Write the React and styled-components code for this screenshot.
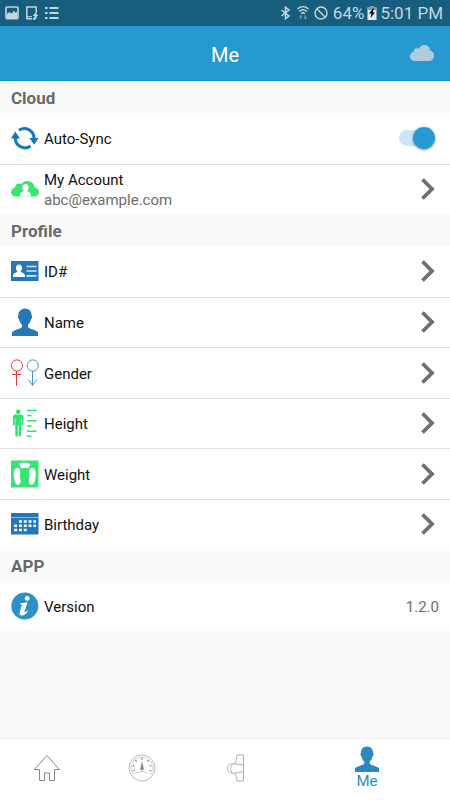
import React, { useState } from "react";
import styled, { createGlobalStyle } from "styled-components";

const GlobalStyle = createGlobalStyle`
  * {
    box-sizing: border-box;
  }

  body {
    margin: 0;
    background: #fafafa;
    font-family: Roboto, "Liberation Sans", sans-serif;
  }

  button {
    font-family: inherit;
  }

  svg {
    display: block;
    flex-shrink: 0;
  }
`;

const Base = styled.div`
  display: flex;
  flex-direction: column;
  min-height: 100vh;
`;

const StatusBar = styled.div`
  display: flex;
  align-items: center;
  justify-content: space-between;
  height: 26px;
  padding: 0 7px 0 5px;
  background: #175d7e;
  color: #c5d7df;
  font-size: 17px;
  line-height: 28px;
`;

const StatusGroup = styled.div`
  display: flex;
  align-items: center;
  gap: ${(props) => props.$gap}px;
`;

const Header = styled.header`
  display: grid;
  grid-template-columns: 1fr auto 1fr;
  align-items: center;
  height: 55px;
  padding: 0 16px;
  background: #2699d2;
  border-bottom: 1px solid #0d94cf;
`;

const Title = styled.h1`
  grid-column: 2;
  margin: 0;
  padding-top: 3px;
  color: #fff;
  font-size: 20px;
  font-weight: 400;
`;

const CloudButton = styled.button`
  justify-self: end;
  padding: 0;
  border: 0;
  background: none;
`;

const Main = styled.main`
  flex: 1;
`;

const SectionTitle = styled.h2`
  height: 32px;
  margin: 0;
  padding: 0 11px;
  background: #fafafa;
  color: #68696d;
  font-size: 17px;
  font-weight: 700;
  line-height: 34px;
`;

const List = styled.ul`
  display: grid;
  grid-auto-rows: 1fr;
  min-height: ${(props) => props.$minHeight}px;
  margin: 0;
  padding: 0;
  background: #fff;
  list-style: none;
`;

const Item = styled.li`
  display: flex;

  & + & {
    border-top: 1px solid #e2e2e2;
  }
`;

const Row = styled.div`
  flex: 1;
  display: flex;
  align-items: center;
  gap: 5px;
  width: 100%;
  padding: 0 ${(props) => props.$end || 15}px 0 11px;
  border: 0;
  background: none;
  color: #111;
  font-size: 15px;
  line-height: 20px;
  text-align: left;
`;

const RowText = styled.span`
  flex: 1;
  display: flex;
  flex-direction: column;
  padding-top: 2px;
`;

const Muted = styled.span`
  color: #6c6c6c;
`;

const Version = styled(Muted)`
  padding-top: 2px;
`;

const Switch = styled.input`
  appearance: none;
  display: flex;
  align-items: center;
  width: 36px;
  height: 16px;
  margin: 0;
  border-radius: 8px;
  background: ${(props) => (props.checked ? "#c8e6f3" : "#c4c4c4")};

  &::before {
    content: "";
    width: 22px;
    height: 22px;
    margin-left: ${(props) => (props.checked ? 14 : 0)}px;
    border-radius: 50%;
    background: ${(props) => (props.checked ? "#2699d2" : "#f5f5f5")};
    box-shadow: 0 1px 3px rgba(0, 0, 0, 0.4);
  }
`;

const TabBar = styled.nav`
  position: sticky;
  bottom: 0;
  display: grid;
  grid-template-columns: 95fr 95fr 95fr 165fr;
  height: 62px;
  border-top: 1px solid #eee;
  background: #fff;
`;

const TabButton = styled.button`
  display: flex;
  flex-direction: column;
  align-items: center;
  justify-content: center;
  padding: 0 1px 3px 0;
  border: 0;
  background: none;
  color: #2490c9;
  font-size: 15px;
  line-height: 18px;
`;

function PersonIcon({ color = "#2379b5", size = 28 }) {
  return (
    <svg width={size} height={size} viewBox="0 0 28 28" fill={color}>
      <path d="M14 0.500c4 0 6.600 3 6.600 6.700 0 .6.5.8.5 1.700 0 1-.5 1.800-1.100 2.300-.6 2.600-1.700 4.300-3 5.500v2.200c.6 2 9.500 3 10 5.600v3.700H1v-3.700c.5-2.600 9.400-3.600 10-5.600v-2.200c-1.300-1.200-2.400-2.900-3-5.500-.6-.5-1.100-1.300-1.100-2.300 0-.9.5-1.100.5-1.700C7.400 3.500 10 .5 14 .5z" />
    </svg>
  );
}

function SyncIcon() {
  return (
    <svg width="28" height="28" viewBox="0 0 28 28">
      <g fill="none" stroke="#1976b8" strokeWidth="3">
        <path d="M8 6.300A9.600 9.600 0 0 1 23 14" />
        <path d="M19.500 22A9.600 9.600 0 0 1 4.300 14" />
      </g>
      <path d="M0 14.500 4.200 7.500 9 14.500zM18.300 14h9.200l-4.300 6.800z" fill="#1976b8" />
    </svg>
  );
}

function AccountIcon() {
  return (
    <svg width="28" height="28" viewBox="0 0 28 28">
      <path
        d="M5 21.500C2 21.500 0 19.500 0 17c0-2.500 1.700-4.300 4-4.600C4.300 10 6 8.500 8 8.500c1 0 1.700.3 2.300.8C11.500 7.200 13.600 6 16 6c4.200 0 7.200 2.800 7.600 6.200 2.500.4 4.400 2.300 4.400 4.800 0 2.600-2 4.500-5 4.500z"
        fill="#38e476"
      />
      <path
        d="M14.500 9c2 0 3.200 1.400 3.200 3.300 0 1.500-.7 2.500-1.300 3.200.3 1.500 3.200 1.400 3.600 4V21.500H9V19.500c.4-2.600 3.300-2.500 3.600-4-.7-.7-1.300-1.700-1.300-3.200 0-1.900 1.200-3.300 3.200-3.300z"
        fill="#fff"
      />
    </svg>
  );
}

function CardIcon() {
  return (
    <svg width="28" height="28" viewBox="0 0 28 28">
      <path d="M0 4h27.500v20H0z" fill="#2379b5" />
      <path
        d="M8 7.500c1.900 0 3 1.500 3 3.400 0 1.500-.6 2.600-1.300 3.300.2 1.500 4 1.300 4.300 4V20H2v-1.800c.3-2.700 4.100-2.500 4.300-4C5.600 13.500 5 12.400 5 10.900 5 9 6.100 7.500 8 7.500z"
        fill="#fff"
      />
      <path d="M15.500 9.500h10M15.500 14h10M15.500 18.800h10" stroke="#d5e5f1" strokeWidth="1.700" />
    </svg>
  );
}

function GenderIcon() {
  return (
    <svg width="28" height="28" viewBox="0 0 28 28" fill="none">
      <g stroke="#ee3437">
        <circle cx="5.900" cy="6.500" r="5.600" />
        <path d="M5.500 12V27M1 15.500h9" />
      </g>
      <g stroke="#4893c9">
        <circle cx="21.700" cy="6.500" r="5.600" />
        <path d="M21.500 12V26.500M17.300 20.500 21.500 26.300 26 20.500" />
      </g>
    </svg>
  );
}

function HeightIcon() {
  return (
    <svg width="28" height="28" viewBox="0 0 28 28">
      <g fill="#2fe370">
        <circle cx="7.200" cy="2.700" r="2.300" />
        <path d="M4.500 5.500h5.400c1.600 0 2.600 1.100 2.600 2.600v7.400c0 1.300-1.800 1.300-1.800 0V9.200h-.5v17.200c0 1.600-2.500 1.600-2.500 0V16.500H6.800v9.900c0 1.600-2.500 1.600-2.500 0V9.200h-.5v6.300c0 1.300-1.800 1.300-1.800 0V8.100c0-1.500 1-2.600 2.500-2.600z" />
      </g>
      <path
        d="M16 1.500h9.500M16 6.500h4.500M16 11.700h9.500M16 17h4.500M16 22.200h9.500M16 27.200h4.500"
        stroke="#2fe370"
        strokeWidth="1.500"
      />
    </svg>
  );
}

function WeightIcon() {
  return (
    <svg width="28" height="28" viewBox="0 0 28 28">
      <path d="M0 .5h27.500v27H0z" fill="#38e476" />
      <g fill="#fff">
        <path d="M8 4c3-1.700 8.500-1.700 11.500 0L17.200 8.300c-2-.8-5-.8-7 0z" />
        <path d="M5.700 8C8.200 7.300 9.500 9.500 9.200 12.500c-.2 2.500-.4 3.500.2 6.500.5 2.700.3 5.200-1.800 5.700-2.200.4-3.600-1.700-4.200-4.700C2.400 15 2 9.200 5.700 8z" />
        <path d="M21.800 8c-2.500-.7-3.800 1.500-3.500 4.500.2 2.500.4 3.500-.2 6.500-.5 2.700-.3 5.200 1.800 5.700 2.200.4 3.600-1.700 4.200-4.700 1-5 1.400-10.800-2.300-12z" />
      </g>
    </svg>
  );
}

function CalendarIcon() {
  return (
    <svg width="28" height="28" viewBox="0 0 28 28">
      <path d="M0 3h27.500v21.500H0z" fill="#2379b5" />
      <path d="M0 7.500h27.500" stroke="#8dbbdb" />
      <g stroke="#fff" strokeWidth="2.600" strokeDasharray="2.900 1.900">
        <path d="M8 11.500h17" />
        <path d="M3.200 15.700h21.800" />
        <path d="M3.200 20h12.500" />
      </g>
    </svg>
  );
}

function InfoIcon() {
  return (
    <svg width="28" height="28" viewBox="0 0 28 28">
      <circle cx="13.800" cy="14" r="13.500" fill="#2b91c6" />
      <circle cx="16.200" cy="6.400" r="2.400" fill="#fff" />
      <path
        d="M9 11.500c2.500-.7 5-1.300 7.500-1.300l-3 9.500c-.3 1.200.7 1 2.800-1.200l.6.700c-2 3-4 4.300-6.300 4.300-2 0-2.500-1.500-1.900-3.300l2.100-6.700c.3-1-.3-1.200-1.800-1.200z"
        fill="#fff"
      />
    </svg>
  );
}

function ChevronIcon() {
  return (
    <svg width="14" height="22" viewBox="0 0 14 22">
      <path d="M1.500 1.500 11 11 1.500 20.500" fill="none" stroke="#6f6f6f" strokeWidth="3.800" />
    </svg>
  );
}

function CloudIcon() {
  return (
    <svg width="24" height="16" viewBox="0 0 24 16">
      <path
        d="M5 16c-3 0-5-1.800-5-4.500 0-2.300 1.500-4 3.600-4.500C3.700 4.600 5 3.300 7 3.300c.8 0 1.300.1 1.900.5C10 1.300 12 0 14.300 0c3.300 0 5.600 2.300 5.700 5.500 2.500.4 4 2.300 4 5 0 3.300-2 5.500-5 5.500z"
        fill="#b0ccdb"
      />
    </svg>
  );
}

function HomeIcon() {
  return (
    <svg width="28" height="28" viewBox="0 0 28 28">
      <path
        d="M14 1.500 26.500 15.500h-5v11h-5V19h-5v7.500h-5v-11h-5z"
        fill="none"
        stroke="#888"
      />
    </svg>
  );
}

function GaugeIcon() {
  return (
    <svg width="28" height="28" viewBox="0 0 28 28" fill="none" stroke="#bbb">
      <circle cx="14" cy="14" r="13" />
      <path d="M5 20.500a11 11 0 1 1 18 0c-2-1.500-3-2.300-5-2-1.500-1.400-6.500-1.400-8 0-2-.3-3 .5-5 2z" stroke="#d4d4d4" />
      <path
        d="M14 3.500v2.500M7.300 5.800l1.500 2M20.700 5.800l-1.500 2M4.300 11.500l2.300.7M23.700 11.500l-2.300.7M4.500 17l2.300-.7M23.500 17l-2.300-.7"
        stroke="#999"
        strokeWidth="1.300"
      />
      <path d="M14 7l1.800 7.800a1.800 1.800 0 1 1-3.600 0z" fill="#888" stroke="none" />
    </svg>
  );
}

function DeviceIcon() {
  return (
    <svg width="28" height="28" viewBox="0 0 28 28" fill="none" stroke="#b0b0b0">
      <path d="M20.500.8H14l-.8 4.700c-.3 2-.8 3.500-2.400 4.200L8 9.900C5.500 10.200 4.500 12 4.500 14s1 4.300 3.500 4.800l2.800.5c1.600.5 2.200 2 2.400 3.700l.8 4h6.500z" />
      <path d="M20.500 11 10.500 9.700M20.500 17.700 10.800 19.300M9.500 10.300C7.200 12 7 16.500 9.500 18.800" />
    </svg>
  );
}

function NotificationIcons() {
  return (
    <StatusGroup $gap={6}>
      <svg width="14" height="14" viewBox="0 0 14 14">
        <rect x="1" y="1" width="12" height="11.800" rx="1" fill="none" stroke="#c5d7df" strokeWidth="1.600" />
        <path d="M2 8 4.500 6l2 1.800 2.300-3 1.500 2L12 5.800V12H2z" fill="#c5d7df" />
      </svg>
      <svg width="14" height="14" viewBox="0 0 14 14" fill="none" stroke="#c5d7df">
        <path d="M7 12.700H1.800V.9h9.400v6" strokeWidth="1.500" />
        <path d="M2 10.700h5" />
        <path d="M10.500 6.500l2.800 3.500h-1.500c0 2.500-1 4-3.500 4l-.8-1.500c1.500 0 2-.8 2-2.500H7.700z" fill="#c5d7df" stroke="none" />
      </svg>
      <svg width="14" height="14" viewBox="0 0 14 14" stroke="#c5d7df" strokeWidth="1.800">
        <path d="M0 2h2.500M4.500 2H13.500M0 7h2.500M4.500 7H13.500M0 12h2.500M4.500 12H13.500" />
      </svg>
    </StatusGroup>
  );
}

function PhoneStatus() {
  return (
    <StatusGroup $gap={5}>
      <svg width="11" height="14" viewBox="0 0 11 14" fill="none" stroke="#c5d7df" strokeWidth="1.500">
        <path d="M1.500 4 9 10 5.500 12.800V1.200L9 4 1.500 10" />
      </svg>
      <StatusGroup $gap={4}>
        <svg width="14" height="14" viewBox="0 0 14 14" fill="none" stroke="#c5d7df" strokeWidth="1.500">
          <path d="M1.500 3c3.300-3 7.700-3 11 0M3.300 5.400c2.200-2 5.200-2 7.400 0M5.200 7.600c1.100-1 2.500-1 3.600 0" />
          <path d="M5 13V9.500M3.700 11 5 9.500M9 9.500V13M10.300 11.500 9 13" stroke="#76a0b5" strokeWidth="1.200" />
        </svg>
        <svg width="14" height="14" viewBox="0 0 14 14" fill="none" stroke="#c5d7df" strokeWidth="1.400">
          <circle cx="7" cy="7" r="6" />
          <path d="M2.800 2.800l8.400 8.400" />
        </svg>
      </StatusGroup>
      <StatusGroup $gap={3}>
        <span>64%</span>
        <svg width="10" height="14" viewBox="0 0 10 14">
          <path d="M3 0h4v1.500h2.500V14H.5V1.500H3z" fill="#e0e9ed" />
          <path d="M3 0h4v1.500h2.500V4h-9V1.500H3z" fill="#76a0b5" />
          <path d="M5.800 2.500 2 7.500h2.300L3.600 12 8 6.500H5.800L7 2.500z" fill="#111" />
        </svg>
        <span>5:01 PM</span>
      </StatusGroup>
    </StatusGroup>
  );
}

const profileRows = [
  { label: "ID#", Icon: CardIcon },
  { label: "Name", Icon: PersonIcon },
  { label: "Gender", Icon: GenderIcon },
  { label: "Height", Icon: HeightIcon },
  { label: "Weight", Icon: WeightIcon },
  { label: "Birthday", Icon: CalendarIcon },
];

export default function App() {
  const [autoSync, setAutoSync] = useState(true);

  return (
    <Base>
      <GlobalStyle />
      <StatusBar>
        <NotificationIcons />
        <PhoneStatus />
      </StatusBar>
      <Header>
        <Title>Me</Title>
        <CloudButton aria-label="Cloud">
          <CloudIcon />
        </CloudButton>
      </Header>
      <Main>
        <SectionTitle>Cloud</SectionTitle>
        <List $minHeight={101}>
          <Item>
            <Row as="label">
              <SyncIcon />
              <RowText>Auto-Sync</RowText>
              <Switch
                type="checkbox"
                checked={autoSync}
                onChange={(e) => setAutoSync(e.target.checked)}
              />
            </Row>
          </Item>
          <Item>
            <Row as="button">
              <AccountIcon />
              <RowText>
                My Account
                <Muted>abc@example.com</Muted>
              </RowText>
              <ChevronIcon />
            </Row>
          </Item>
        </List>
        <SectionTitle>Profile</SectionTitle>
        <List $minHeight={303}>
          {profileRows.map(({ label, Icon }) => (
            <Item key={label}>
              <Row as="button">
                <Icon />
                <RowText>{label}</RowText>
                <ChevronIcon />
              </Row>
            </Item>
          ))}
        </List>
        <SectionTitle>APP</SectionTitle>
        <List $minHeight={50}>
          <Item>
            <Row $end={11}>
              <InfoIcon />
              <RowText>Version</RowText>
              <Version>1.2.0</Version>
            </Row>
          </Item>
        </List>
      </Main>
      <TabBar>
        <TabButton aria-label="Home">
          <HomeIcon />
        </TabButton>
        <TabButton aria-label="Gauge">
          <GaugeIcon />
        </TabButton>
        <TabButton aria-label="Device">
          <DeviceIcon />
        </TabButton>
        <TabButton aria-current="page">
          <PersonIcon color="#2b8abb" size={26} />
          Me
        </TabButton>
      </TabBar>
    </Base>
  );
}
